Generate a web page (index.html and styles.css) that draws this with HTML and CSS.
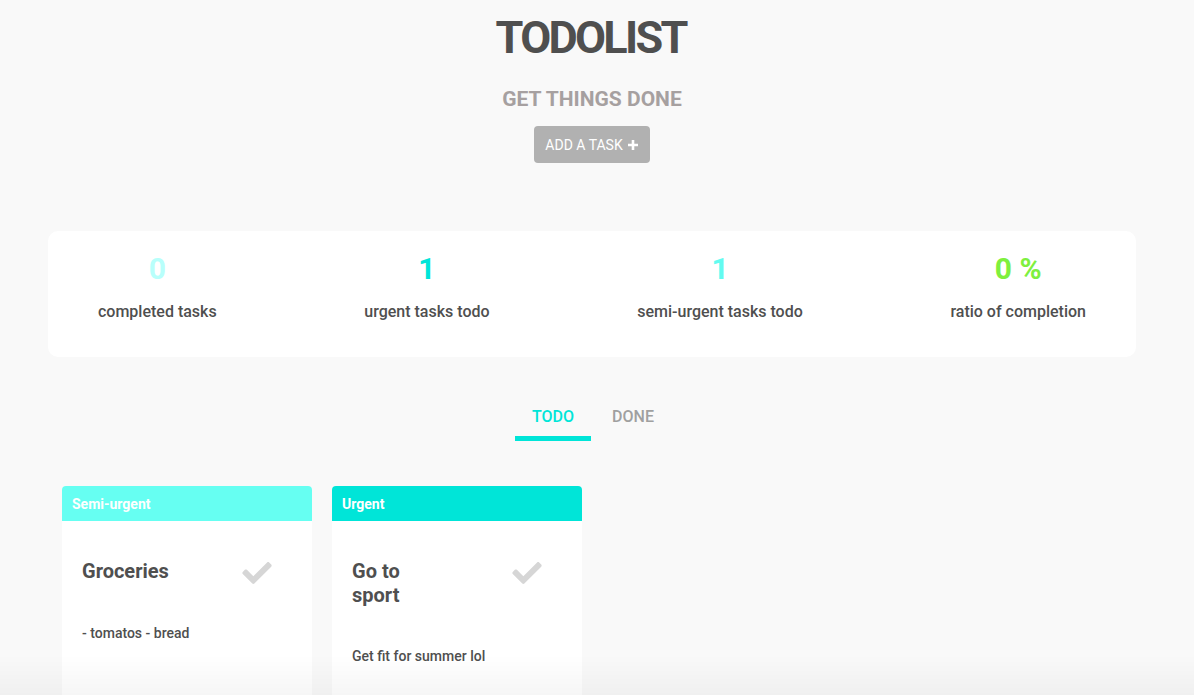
FILE: index.html
```html
<!DOCTYPE html>
<html lang="en">
<head>
<meta charset="utf-8">
<title>Todolist</title>
<link rel="stylesheet" href="styles.css">
</head>
<body>
<header class="hero">
  <h1 class="title">TODOLIST</h1>
  <h2 class="subtitle">GET THINGS DONE</h2>
  <button class="add-btn">ADD A TASK
    <svg class="plus" viewBox="0 0 12 12" width="12" height="12"><path d="M6 1v10M1 6h10" stroke="#fff" stroke-width="2.6" stroke-linecap="butt"/></svg>
  </button>
</header>

<section class="stats">
  <div class="stat">
    <div class="stat-num c-done">0</div>
    <div class="stat-label">completed tasks</div>
  </div>
  <div class="stat">
    <div class="stat-num c-urgent">1</div>
    <div class="stat-label">urgent tasks todo</div>
  </div>
  <div class="stat">
    <div class="stat-num c-semi">1</div>
    <div class="stat-label">semi-urgent tasks todo</div>
  </div>
  <div class="stat">
    <div class="stat-num c-ratio">0 %</div>
    <div class="stat-label">ratio of completion</div>
  </div>
</section>

<nav class="tabs">
  <div class="tab active">TODO</div>
  <div class="tab">DONE</div>
</nav>

<section class="cards">
  <article class="card">
    <div class="card-head semi">Semi-urgent</div>
    <div class="card-body">
      <div class="card-row">
        <div class="card-title">Groceries</div>
        <svg class="check" viewBox="0 64 512 384" width="30" height="22"><path d="M173.898 439.404l-166.4-166.4c-9.997-9.997-9.997-26.206 0-36.204l36.203-36.204c9.997-9.998 26.207-9.998 36.204 0L192 312.69 432.095 72.596c9.997-9.997 26.207-9.997 36.204 0l36.203 36.204c9.997 9.997 9.997 26.206 0 36.204l-294.4 294.401c-9.998 9.997-26.207 9.997-36.204-.001z" fill="#d6d6d6"/></svg>
      </div>
      <p class="card-desc">- tomatos - bread</p>
    </div>
  </article>
  <article class="card">
    <div class="card-head urgent">Urgent</div>
    <div class="card-body">
      <div class="card-row">
        <div class="card-title">Go to sport</div>
        <svg class="check" viewBox="0 64 512 384" width="30" height="22"><path d="M173.898 439.404l-166.4-166.4c-9.997-9.997-9.997-26.206 0-36.204l36.203-36.204c9.997-9.998 26.207-9.998 36.204 0L192 312.69 432.095 72.596c9.997-9.997 26.207-9.997 36.204 0l36.203 36.204c9.997 9.997 9.997 26.206 0 36.204l-294.4 294.401c-9.998 9.997-26.207 9.997-36.204-.001z" fill="#d6d6d6"/></svg>
      </div>
      <p class="card-desc">Get fit for summer lol</p>
    </div>
  </article>
</section>
<div class="fade"></div>
</body>
</html>
```
FILE: styles.css
```css
* { box-sizing: border-box; }
html, body { margin: 0; padding: 0; }
body {
  background: #f9f9f9;
  font-family: Roboto, "Noto Sans", "Liberation Sans", sans-serif;
  color: #4f4f4f;
  height: 695px;
  overflow: hidden;
}
.hero {
  display: flex;
  flex-direction: column;
  align-items: center;
  padding-top: 12px;
  padding-right: 10px;
}
.title {
  margin: 0;
  font-size: 45px;
  line-height: 52px;
  font-weight: 700;
  letter-spacing: -2.7px;
  text-indent: -2.7px;
  color: #4f4f4f;
}
.subtitle {
  margin: 23px 0 0;
  font-size: 21px;
  line-height: 24px;
  font-weight: 700;
  color: #a6a0a0;
}
.add-btn {
  margin-top: 15px;
  height: 37px;
  width: 116px;
  border: 0;
  border-radius: 4px;
  background: #b1b1b1;
  color: #fff;
  font-family: inherit;
  font-size: 14px;
  font-weight: 400;
  display: flex;
  align-items: center;
  justify-content: center;
  gap: 4px;
  padding: 0;
}
.plus { display: block; }

.stats {
  margin: 68px 58px 0 48px;
  height: 126px;
  background: #fff;
  border-radius: 10px;
  display: flex;
  justify-content: space-between;
  padding: 20px 50px 0;
}
.stat {
  display: flex;
  flex-direction: column;
  align-items: center;
}
.stat-num {
  font-size: 30px;
  line-height: 36px;
  font-weight: 700;
}
.stat-label {
  margin-top: 15px;
  font-size: 16px;
  line-height: 20px;
  font-weight: 500;
  color: #4f4f4f;
}
.c-done { color: #b8fffb; }
.c-urgent { color: #00e5d8; }
.c-semi { color: #63fbf0; }
.c-ratio { color: #7ef03e; }

.tabs {
  margin-top: 50px;
  display: flex;
  justify-content: center;
  gap: 4px;
  padding-right: 8px;
}
.tab {
  width: 76px;
  text-align: center;
  font-size: 16px;
  line-height: 20px;
  font-weight: 500;
  color: #a0a0a0;
  padding-bottom: 9px;
  border-bottom: 5px solid transparent;
}
.tab.active {
  color: #00e5d8;
  border-bottom-color: #00e5d8;
}

.cards {
  margin-top: 45px;
  padding-left: 62px;
  display: flex;
  gap: 20px;
}
.card {
  width: 250px;
  background: #fff;
  border-radius: 4px 4px 0 0;
  overflow: hidden;
}
.card-head {
  height: 35px;
  line-height: 36px;
  padding: 0 10px;
  color: #fff;
  font-size: 14px;
  font-weight: 700;
}
.card-head.semi { background: #66fff2; }
.card-head.urgent { background: #00e5d8; }
.card-body {
  padding: 38px 20px 60px;
}
.card-row {
  display: flex;
  justify-content: space-between;
  align-items: flex-start;
}
.card-title {
  max-width: 90px;
  font-size: 20px;
  line-height: 24px;
  font-weight: 700;
  color: #4f4f4f;
}
.check {
  display: block;
  margin-top: 3px;
  margin-right: 20px;
}
.card-desc {
  margin: 39px 0 0;
  font-size: 14px;
  line-height: 20px;
  font-weight: 500;
  color: #4f4f4f;
}
.fade {
  position: fixed;
  left: 0;
  right: 0;
  bottom: 0;
  height: 40px;
  background: linear-gradient(to bottom, rgba(0,0,0,0), rgba(0,0,0,0.035));
  pointer-events: none;
}
```
